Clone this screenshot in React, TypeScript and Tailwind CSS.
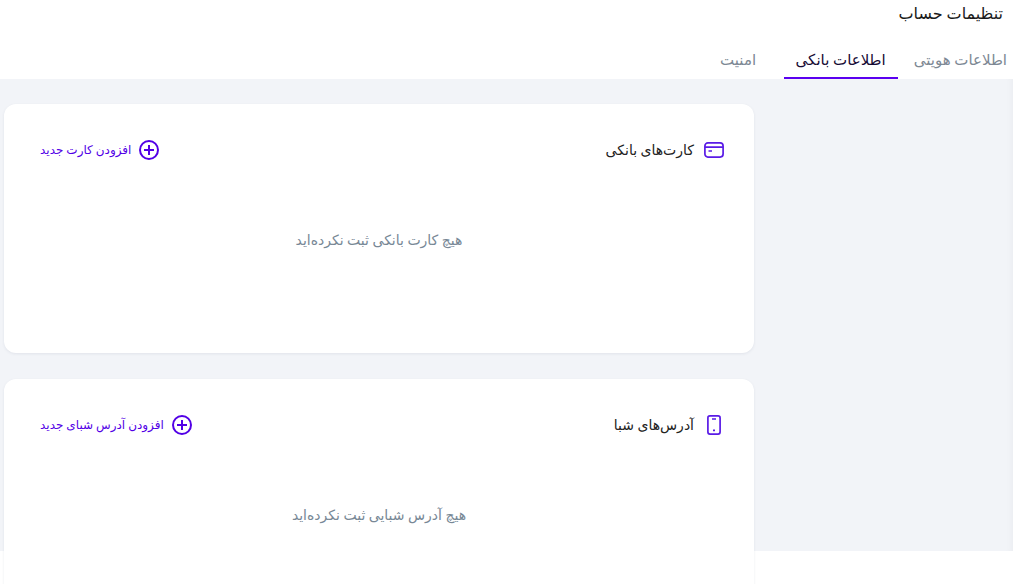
import React, { useState } from "react";

const TABS = [
  { id: "identity", label: "اطلاعات هویتی" },
  { id: "bank", label: "اطلاعات بانکی" },
  { id: "security", label: "امنیت" },
];

const CardIcon = () => (
  <svg className="w-5 h-5" viewBox="0 0 20 20" fill="none" stroke="currentColor" strokeWidth={1.7} aria-hidden="true">
    <rect x="0.9" y="2.9" width="18.2" height="14.2" rx="3" />
    <path d="M1 7.2h18M4.5 11h3.5" />
  </svg>
);

const PhoneIcon = () => (
  <svg className="w-5 h-5" viewBox="0 0 20 20" fill="none" stroke="currentColor" strokeWidth={1.7} aria-hidden="true">
    <rect x="3.9" y="0.9" width="12.2" height="18.2" rx="2" />
    <path d="M8 4h4M9 15.4h2" />
  </svg>
);

const PlusIcon = () => (
  <svg className="w-5 h-5" viewBox="0 0 20 20" fill="none" stroke="currentColor" strokeWidth={2} aria-hidden="true">
    <circle cx="10" cy="10" r="9" />
    <path d="M10 5v10M5 10h10" />
  </svg>
);

interface AccountCardProps {
  icon: React.ReactNode;
  title: string;
  addLabel: string;
  emptyText: string;
}

function AccountCard({ icon, title, addLabel, emptyText }: AccountCardProps) {
  return (
    <section className="flex flex-col shrink-0 h-[249px] pt-8 bg-white rounded-xl shadow-[0_1px_3px_rgba(30,40,80,0.08)]">
      <div className="flex items-center justify-between h-7 pr-[30px] pl-9">
        <h2 className="flex items-center gap-[10px] text-sm font-medium text-[#222222]">
          <span className="text-[#5a1be6]">{icon}</span>
          {title}
        </h2>
        <button type="button" className="flex items-center gap-2 text-xs text-[#5200e6]">
          <PlusIcon />
          {addLabel}
        </button>
      </div>
      <p className="pt-[66px] text-center text-sm text-[#788896]">{emptyText}</p>
    </section>
  );
}

export default function App() {
  const [activeTab, setActiveTab] = useState("bank");

  return (
    <div
      dir="rtl"
      lang="fa"
      className="min-h-screen bg-white font-['Roboto','DejaVu_Sans',sans-serif]"
    >
      <header className="flex flex-col">
        <h1 className="h-11 pr-[10px] pt-1 text-base leading-5 text-[#1a1a1a]">تنظیمات حساب</h1>
        <nav className="flex gap-1 pr-[6px]">
          {TABS.map(({ id, label }) => (
            <button
              key={id}
              type="button"
              onClick={() => setActiveTab(id)}
              className={
                activeTab === id
                  ? "h-[35px] min-w-[83px] px-3 border-b-2 border-[#5a00f0] text-[15px] text-[#160a33]"
                  : "h-[35px] min-w-[83px] first:pr-0 px-3 border-b-2 border-transparent text-[15px] text-[#7d8894]"
              }
            >
              {label}
            </button>
          ))}
        </nav>
      </header>

      <main className="flex flex-col gap-[26px] h-[calc(100vh-112px)] pt-[25px] pl-1 pr-[259px] bg-[#f2f4f8] shadow-[inset_-6px_0_6px_-4px_rgba(0,0,0,0.03)]">
        <AccountCard
          icon={<CardIcon />}
          title="کارت‌های بانکی"
          addLabel="افزودن کارت جدید"
          emptyText="هیچ کارت بانکی ثبت نکرده‌اید"
        />
        <AccountCard
          icon={<PhoneIcon />}
          title="آدرس‌های شبا"
          addLabel="افزودن آدرس شبای جدید"
          emptyText="هیچ آدرس شبایی ثبت نکرده‌اید"
        />
      </main>
    </div>
  );
}
